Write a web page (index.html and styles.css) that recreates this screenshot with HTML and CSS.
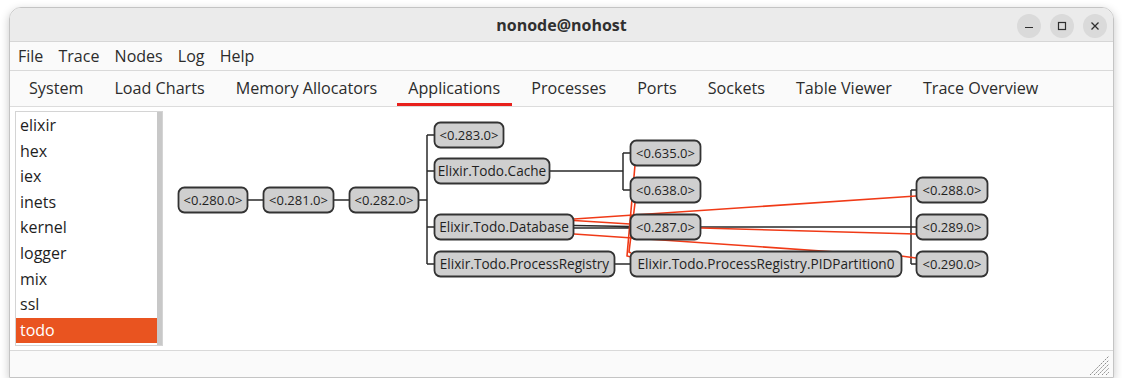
FILE: index.html
```html
<!DOCTYPE html>
<html lang="en">
<head>
  <meta charset="UTF-8" />
  <title>nonode@nohost</title>
  <link rel="stylesheet" href="styles.css">
</head>
<body>
  <div class="window">
    <header class="titlebar">
      <span></span>
      <span class="title">nonode@nohost</span>
      <div class="controls">
        <button class="ctl" title="Minimize">
          <svg width="10" height="10" viewBox="0 0 10 10"><path d="M1 6.5h8" stroke="#2e2e2e" stroke-width="1.2"/></svg>
        </button>
        <button class="ctl" title="Maximize">
          <svg width="10" height="10" viewBox="0 0 10 10"><rect x="1.5" y="1.5" width="7" height="7" fill="none" stroke="#2e2e2e" stroke-width="1.2"/></svg>
        </button>
        <button class="ctl" title="Close">
          <svg width="10" height="10" viewBox="0 0 10 10"><path d="M1.5 1.5l7 7M8.5 1.5l-7 7" stroke="#2e2e2e" stroke-width="1.3"/></svg>
        </button>
      </div>
    </header>

    <nav class="menubar">
      <span>File</span>
      <span>Trace</span>
      <span>Nodes</span>
      <span>Log</span>
      <span>Help</span>
    </nav>

    <nav class="tabs">
      <span class="tab">System</span>
      <span class="tab">Load Charts</span>
      <span class="tab">Memory Allocators</span>
      <span class="tab active">Applications</span>
      <span class="tab">Processes</span>
      <span class="tab">Ports</span>
      <span class="tab">Sockets</span>
      <span class="tab">Table Viewer</span>
      <span class="tab">Trace Overview</span>
    </nav>

    <main class="content">
      <div class="applist">
        <ul>
          <li>elixir</li>
          <li>hex</li>
          <li>iex</li>
          <li>inets</li>
          <li>kernel</li>
          <li>logger</li>
          <li>mix</li>
          <li>ssl</li>
          <li class="selected">todo</li>
        </ul>
        <div class="scrollbar"></div>
      </div>

      <div class="canvas">
        <!-- viewBox uses page coordinates so nodes can be read off the screenshot -->
        <svg class="tree" viewBox="163 107 949 243">
          <g class="edges">
            <path d="M247 200H262M333 200H348M418 200H426"/>
            <path d="M426 135V264M426 135H433M426 171H433M426 227H433M426 264H433"/>
            <path d="M549 171H622M622 153V190M622 153H629M622 190H629"/>
            <path d="M573 225.5L629 226.5M573 228H629"/>
            <path d="M614 264H629"/>
            <path d="M700 227H910M910 190V264M910 190H915M910 227H915M910 264H915"/>
          </g>
          <g class="links">
            <path d="M573 219L915 196"/>
            <path d="M573 220.5L629 224"/>
            <path d="M573 234L835 252"/>
            <path d="M700 228L915 234"/>
            <path d="M900 256L915 258"/>
            <path d="M634 165L626 256L630 257"/>
            <path d="M634 203L628 252L630 253"/>
          </g>
          <g class="nodes">
            <rect x="177.5" y="187.5" width="69" height="25" rx="6"/>
            <text x="212" y="205">&lt;0.280.0&gt;</text>

            <rect x="262.5" y="187.5" width="70" height="25" rx="6"/>
            <text x="297.5" y="205">&lt;0.281.0&gt;</text>

            <rect x="348.5" y="187.5" width="69" height="25" rx="6"/>
            <text x="383" y="205">&lt;0.282.0&gt;</text>

            <rect x="433.5" y="122.5" width="69" height="25" rx="6"/>
            <text x="468" y="140">&lt;0.283.0&gt;</text>

            <rect x="433.5" y="158.5" width="115" height="25" rx="6"/>
            <text class="name" x="491" y="176">Elixir.Todo.Cache</text>

            <rect x="433.5" y="214.5" width="139" height="25" rx="6"/>
            <text class="name" x="503" y="232">Elixir.Todo.Database</text>

            <rect x="433.5" y="251.5" width="180" height="25" rx="6"/>
            <text class="name" x="523.5" y="269">Elixir.Todo.ProcessRegistry</text>

            <rect x="629.5" y="140.5" width="70" height="25" rx="6"/>
            <text x="664.5" y="158">&lt;0.635.0&gt;</text>

            <rect x="629.5" y="177.5" width="70" height="25" rx="6"/>
            <text x="664.5" y="195">&lt;0.638.0&gt;</text>

            <rect x="629.5" y="214.5" width="70" height="25" rx="6"/>
            <text x="664.5" y="232">&lt;0.287.0&gt;</text>

            <rect x="629.5" y="251.5" width="271" height="25" rx="6"/>
            <text class="name" x="765" y="269">Elixir.Todo.ProcessRegistry.PIDPartition0</text>

            <rect x="915.5" y="177.5" width="71" height="25" rx="6"/>
            <text x="951" y="195">&lt;0.288.0&gt;</text>

            <rect x="915.5" y="214.5" width="71" height="25" rx="6"/>
            <text x="951" y="232">&lt;0.289.0&gt;</text>

            <rect x="915.5" y="251.5" width="71" height="25" rx="6"/>
            <text x="951" y="269">&lt;0.290.0&gt;</text>
          </g>
        </svg>
      </div>
    </main>

    <footer class="statusbar">
      <svg class="grip" width="22" height="22" viewBox="0 0 22 22">
        <path d="M2 21L21 2M6 21L21 6M10 21L21 10M14 21L21 14M18 21L21 18" stroke="#8c8c8c" stroke-width="1" stroke-dasharray="2 1"/>
      </svg>
    </footer>
  </div>
</body>
</html>
```

FILE: styles.css
```css
body {
  margin: 0;
  background: #ffffff;
  font-family: "Open Sans", "Noto Sans", sans-serif;
  color: #2c2c2c;
}
.window {
  box-sizing: border-box;
  width: 1105px;
  height: 371px;
  margin: 7px 0 0 9px;
  border: 1px solid #c4c4c4;
  border-radius: 12px 12px 0 0;
  box-shadow: 0 3px 10px rgba(0,0,0,0.22);
  display: flex;
  flex-direction: column;
  overflow: hidden;
}
.titlebar {
  height: 33px;
  flex: none;
  background: #ebebeb;
  border-bottom: 1px solid #d6d6d6;
  display: grid;
  grid-template-columns: 1fr auto 1fr;
  align-items: center;
}
.title {
  font-size: 16px;
  font-weight: bold;
  color: #303030;
  padding-top: 1px;
}
.controls {
  justify-self: end;
  display: flex;
  gap: 9px;
  padding-right: 6px;
  padding-top: 2px;
}
.ctl {
  width: 24px;
  height: 24px;
  padding: 0;
  border: none;
  border-radius: 50%;
  background: #dadada;
  display: flex;
  align-items: center;
  justify-content: center;
}
.menubar {
  height: 28px;
  flex: none;
  background: #fafafa;
  border-bottom: 1px solid #d9d9d9;
  display: flex;
  align-items: center;
  font-size: 16px;
}
.menubar span {
  padding: 0 7.6px;
}
.menubar span:first-child {
  padding-left: 8px;
}
.tabs {
  height: 35px;
  flex: none;
  background: #fafafa;
  border-bottom: 1px solid #dcdcdc;
  display: flex;
  padding-left: 3.5px;
  font-size: 16.15px;
}
.tab {
  margin: 0 4px;
  padding: 0 11.5px;
  display: flex;
  align-items: center;
  border-bottom: 3px solid transparent;
  padding-top: 1px;
}
.tab.active {
  border-bottom-color: #e8201c;
}
.content {
  height: 243px;
  flex: none;
  background: #ffffff;
  border-bottom: 1px solid #d9d9d9;
  display: flex;
}
.applist {
  box-sizing: border-box;
  width: 148px;
  height: 235px;
  margin: 4px 0 0 5px;
  border: 1px solid #d4d4d4;
  display: flex;
}
.applist ul {
  list-style: none;
  margin: 0;
  padding: 1px 0 0;
  flex: 1;
  font-size: 16px;
  color: #1e1e1e;
}
.applist li {
  height: 25.6px;
  line-height: 25.6px;
  padding-left: 4px;
}
.applist li.selected {
  background: #e95420;
  color: #ffffff;
}
.scrollbar {
  width: 5px;
  background: #c8c8c8;
}
.canvas {
  flex: 1;
  margin-left: 1px;
}
.tree {
  display: block;
  width: 949px;
  height: 243px;
}
.edges path {
  fill: none;
  stroke: #2a2a2a;
  stroke-width: 1.5;
}
.links path {
  fill: none;
  stroke: #f03a17;
  stroke-width: 1.6;
}
.nodes rect {
  fill: #cfcfcf;
  stroke: #333333;
  stroke-width: 1.8;
}
.nodes text {
  font-family: "Open Sans", "Noto Sans", sans-serif;
  font-size: 13px;
  fill: #1f1f1f;
  text-anchor: middle;
}
.nodes text.name {
  font-size: 13.6px;
}
.statusbar {
  flex: 1;
  background: #fafafa;
  display: flex;
  justify-content: flex-end;
  align-items: flex-end;
  padding: 0 3px 1px 0;
}
```
